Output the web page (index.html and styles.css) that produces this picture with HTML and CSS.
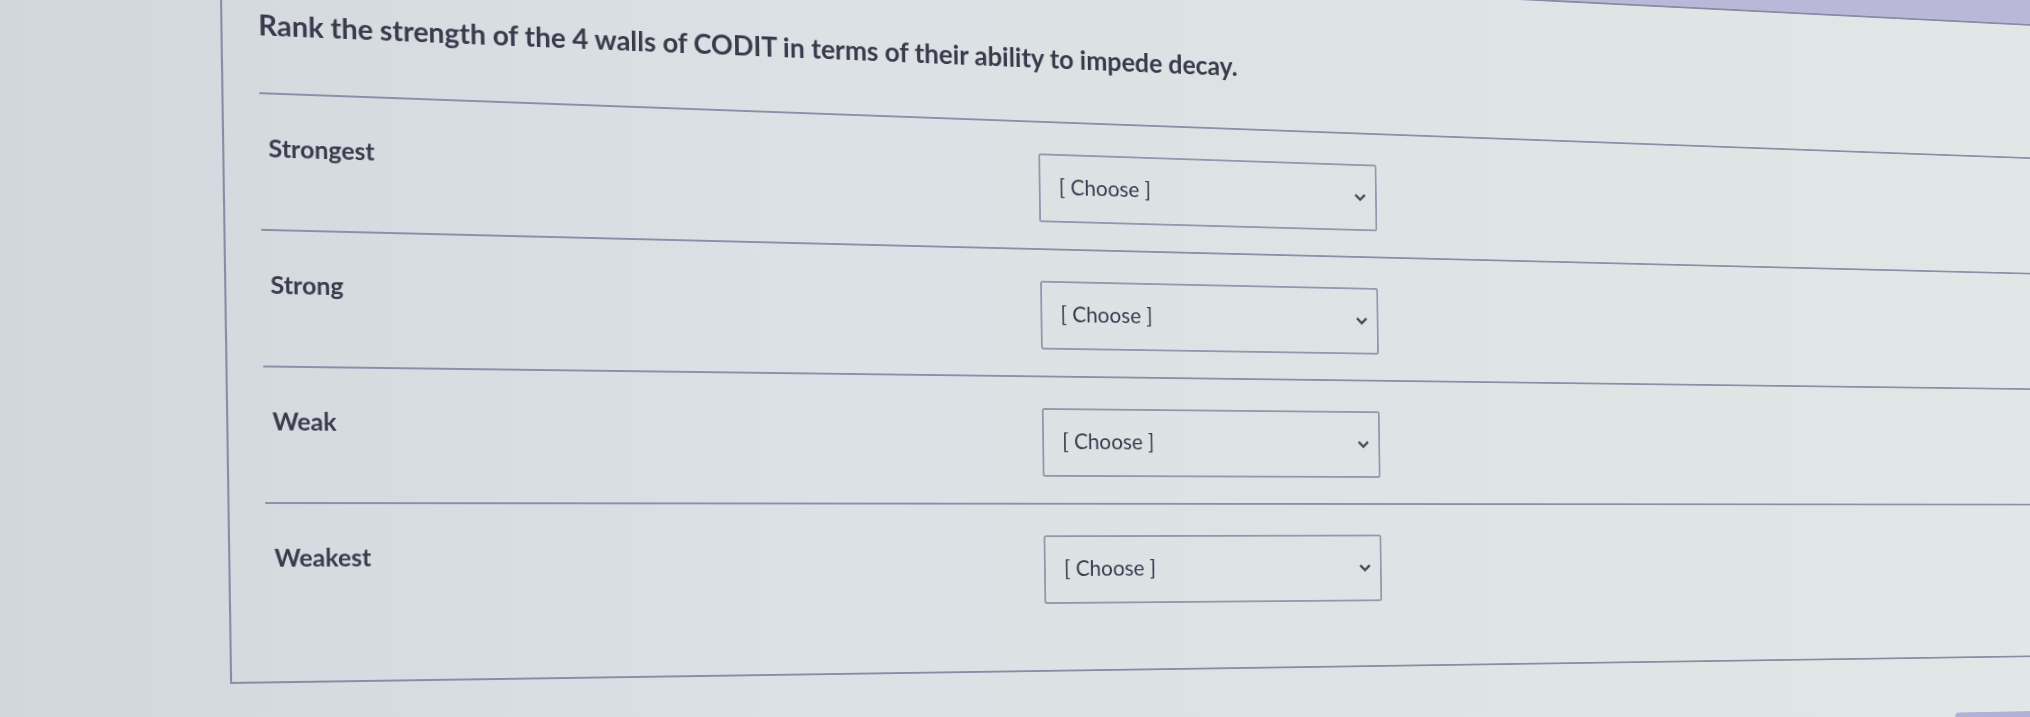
FILE: index.html
```html
<html>
<head>
<title>Quiz question</title>
<link rel="stylesheet" href="styles.css">
</head>
<body>
<div class="page">
    <div class="question-header"></div>
    <div class="question">
        <p class="question-text">Rank the strength of the 4 walls of CODIT in terms of their ability to impede decay.</p>
        <div class="answer-row">
            <div class="answer-label">Strongest</div>
            <div class="answer-select">
                <span>[ Choose ]</span>
                <svg class="chevron" width="15" height="10" viewBox="0 0 15 10"><path d="M2 2 L7.5 7.5 L13 2" fill="none" stroke="#4a4a5c" stroke-width="2.6"/></svg>
            </div>
        </div>
        <div class="answer-row">
            <div class="answer-label">Strong</div>
            <div class="answer-select">
                <span>[ Choose ]</span>
                <svg class="chevron" width="15" height="10" viewBox="0 0 15 10"><path d="M2 2 L7.5 7.5 L13 2" fill="none" stroke="#4a4a5c" stroke-width="2.6"/></svg>
            </div>
        </div>
        <div class="answer-row">
            <div class="answer-label">Weak</div>
            <div class="answer-select">
                <span>[ Choose ]</span>
                <svg class="chevron" width="15" height="10" viewBox="0 0 15 10"><path d="M2 2 L7.5 7.5 L13 2" fill="none" stroke="#4a4a5c" stroke-width="2.6"/></svg>
            </div>
        </div>
        <div class="answer-row last">
            <div class="answer-label">Weakest</div>
            <div class="answer-select">
                <span>[ Choose ]</span>
                <svg class="chevron" width="15" height="10" viewBox="0 0 15 10"><path d="M2 2 L7.5 7.5 L13 2" fill="none" stroke="#4a4a5c" stroke-width="2.6"/></svg>
            </div>
        </div>
    </div>
    <div class="footer">
        <div class="next-btn"></div>
    </div>
</div>
</body>
</html>
```

FILE: styles.css
```css
* {
    padding: 0;
    margin: 0;
    box-sizing: border-box;
}
html {
    overflow: hidden;
}
body {
    font-family: Lato, "Open Sans", sans-serif;
    background: linear-gradient(to right, #d1d7dc, #dbe1e4 40%, #e1e7e6);
    color: #3b3a4d;
    overflow: hidden;
    width: 2030px;
    height: 717px;
    /* the screen was photographed at an angle */
    perspective: 2000px;
    perspective-origin: 1015px 513px;
}
.page {
    width: 2700px;
    margin-top: -130px;
    padding-left: 226px;
    transform-origin: 228px 530px;
    transform: rotateY(10.6deg) skewX(0.8deg);
}
.question-header {
    height: 65px;
    width: 2400px;
    background: #b9b8d8;
    border-left: 2px solid #8e8da8;
    border-bottom: 2px solid #8b89a6;
}
.question {
    border-left: 2px solid #8c8ba6;
    border-bottom: 2px solid #8c8ba6;
    width: 2400px;
    height: 749px;
    padding-left: 34px;
}
.question-text {
    font-size: 28px;
    font-weight: 700;
    line-height: 34px;
    padding-top: 71px;
    height: 156px;
    letter-spacing: -0.05px;
}
.answer-row {
    border-top: 2px solid #8f8eaa;
    height: 137px;
    display: flex;
    padding-left: 8px;
}
.answer-row.last {
    height: 178px;
}
.answer-label {
    width: 788px;
    font-size: 24px;
    font-weight: 700;
    line-height: 30px;
    padding-top: 39px;
}
.answer-select {
    margin-top: 33px;
    width: 383px;
    height: 74px;
    border: 2px solid #9896ae;
    border-radius: 3px;
    display: flex;
    align-items: center;
    justify-content: space-between;
    padding: 0 10px 0 20px;
    font-size: 23px;
    color: #3a3a4e;
}
.answer-select span {
    margin-top: -4px;
}
.footer {
    display: flex;
    padding: 64px 0 0 1924px;
}
.next-btn {
    width: 110px;
    height: 52px;
    background: #b3b0d6;
    border-radius: 4px;
}
```
